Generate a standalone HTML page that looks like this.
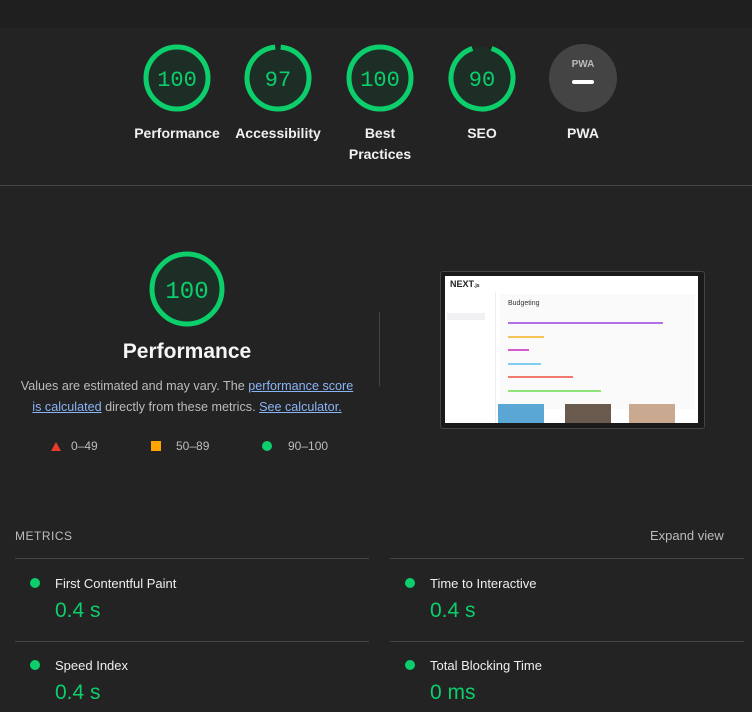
<!DOCTYPE html>
<html><head><meta charset="utf-8"><style>
body{margin:0;width:752px;height:712px;background:#232323;font-family:"Liberation Sans",sans-serif;overflow:hidden;position:relative;color:#eee}
.top{position:absolute;left:0;top:0;width:752px;height:28px;background:#1f1f1f}
.abs{position:absolute}
.lbl{position:absolute;width:100px;text-align:center;font-size:14px;font-weight:bold;color:#f0f0f0;line-height:21px}
.hr{position:absolute;height:1px;background:#444}
a{color:#8ab4f8;text-decoration:underline}
.met{position:absolute;font-size:13px;color:#eee}
.val{position:absolute;font-size:21px;color:#0cce6b}
.dot{position:absolute;width:10px;height:10px;border-radius:50%;background:#0cce6b}
</style></head><body>
<div class="top"></div>
<svg class="abs" style="left:0;top:0" width="752" height="712">
<g fill="#1c2e26" stroke="#0cce6b" stroke-width="5">
<circle cx="177" cy="78" r="31"/>
<circle cx="380" cy="78" r="31"/>
<circle cx="187" cy="289" r="35"/>
</g>
<circle cx="278" cy="78" r="31" fill="#1c2e26"/>
<circle cx="278" cy="78" r="31" fill="none" stroke="#0cce6b" stroke-width="5" stroke-dasharray="189 200" transform="rotate(-85 278 78)"/>
<circle cx="482" cy="78" r="31" fill="#1c2e26"/>
<circle cx="482" cy="78" r="31" fill="none" stroke="#0cce6b" stroke-width="5" stroke-dasharray="175 200" transform="rotate(-72 482 78)"/>
<circle cx="583" cy="78" r="34" fill="#444"/>
<rect x="572" y="80" width="22" height="4" rx="2" fill="#fff"/>
<text x="583" y="67" font-family="Liberation Sans" font-size="10" font-weight="bold" fill="#bbb" text-anchor="middle">PWA</text>
<g font-family="Liberation Mono" font-size="22" fill="#0cce6b" text-anchor="middle">
<text x="177" y="86">100</text><text x="278" y="86">97</text><text x="380" y="86">100</text><text x="482" y="86">90</text>
<text x="187" y="298" font-size="24">100</text>
</g>
<polygon points="51,451 56,442 61,451" fill="#eb3a2e"/>
<rect x="151" y="441" width="10" height="10" fill="#ffa400"/>
<circle cx="267" cy="446" r="5" fill="#0cce6b"/>
</svg>
<div class="lbl" style="left:127px;top:123px">Performance</div>
<div class="lbl" style="left:228px;top:123px">Accessibility</div>
<div class="lbl" style="left:330px;top:123px">Best<br>Practices</div>
<div class="lbl" style="left:432px;top:123px">SEO</div>
<div class="lbl" style="left:533px;top:123px">PWA</div>
<div class="hr" style="left:0;top:185px;width:752px"></div>
<div class="abs" style="left:0;top:340px;width:374px;text-align:center;font-size:21px;font-weight:bold;color:#f5f5f5">Performance</div>
<div class="abs" style="left:0;top:376px;width:374px;text-align:center;font-size:12.6px;line-height:21px;color:#bbb;white-space:nowrap">Values are estimated and may vary. The <a>performance score</a><br><a>is calculated</a> directly from these metrics. <a>See calculator.</a></div>
<div class="abs" style="left:71px;top:439px;font-size:12px;color:#bbb">0–49</div>
<div class="abs" style="left:176px;top:439px;font-size:12px;color:#bbb">50–89</div>
<div class="abs" style="left:288px;top:439px;font-size:12px;color:#bbb">90–100</div>
<div class="abs" style="left:379px;top:312px;width:1px;height:74px;background:#444"></div>
<div class="abs" style="left:440px;top:271px;width:263px;height:156px;background:#1a1a1a;border:1px solid #444;border-radius:3px"></div>
<div class="abs" style="left:445px;top:276px;width:253px;height:147px;background:#fff;overflow:hidden">
 <div class="abs" style="left:5px;top:3px;font-size:9px;font-weight:bold;color:#222">NEXT<span style="font-size:5px">.js</span></div>
 <div class="abs" style="left:2px;top:37px;width:38px;height:7px;background:#f1f1f4"></div>
 <div class="abs" style="left:0;top:16px;width:50px;height:131px;border-right:1px solid #eee"></div>
 <div class="abs" style="left:55px;top:18px;width:195px;height:115px;background:#fafafb"></div>
 <div class="abs" style="left:63px;top:24px;font-size:7px;color:#333">Budgeting</div>
 <div class="abs" style="left:63px;top:46px;width:155px;height:2px;background:#b06ee8"></div>
 <div class="abs" style="left:63px;top:60px;width:36px;height:2px;background:#f6c356"></div>
 <div class="abs" style="left:63px;top:73px;width:21px;height:2px;background:#d65ad0"></div>
 <div class="abs" style="left:63px;top:87px;width:33px;height:2px;background:#7fcdf0"></div>
 <div class="abs" style="left:63px;top:100px;width:65px;height:2px;background:#f07a6e"></div>
 <div class="abs" style="left:63px;top:114px;width:93px;height:2px;background:#8fe57a"></div>
 <div class="abs" style="left:53px;top:128px;width:46px;height:19px;background:#5aa7d6"></div>
 <div class="abs" style="left:120px;top:128px;width:46px;height:19px;background:#6b5a4e"></div>
 <div class="abs" style="left:184px;top:128px;width:46px;height:19px;background:#c9a98f"></div>
</div>
<div class="abs" style="left:15px;top:529px;font-size:12px;color:#bbb;letter-spacing:.5px">METRICS</div>
<div class="abs" style="left:650px;top:528px;font-size:13px;color:#bbb">Expand view</div>
<div class="hr" style="left:15px;top:558px;width:354px"></div>
<div class="hr" style="left:390px;top:558px;width:354px"></div>
<div class="hr" style="left:15px;top:641px;width:354px"></div>
<div class="hr" style="left:390px;top:641px;width:354px"></div>
<div class="dot" style="left:30px;top:578px"></div><div class="met" style="left:55px;top:576px">First Contentful Paint</div><div class="val" style="left:55px;top:599px">0.4 s</div>
<div class="dot" style="left:405px;top:578px"></div><div class="met" style="left:430px;top:576px">Time to Interactive</div><div class="val" style="left:430px;top:599px">0.4 s</div>
<div class="dot" style="left:30px;top:660px"></div><div class="met" style="left:55px;top:658px">Speed Index</div><div class="val" style="left:55px;top:681px">0.4 s</div>
<div class="dot" style="left:405px;top:660px"></div><div class="met" style="left:430px;top:658px">Total Blocking Time</div><div class="val" style="left:430px;top:681px">0 ms</div>
</body></html>
